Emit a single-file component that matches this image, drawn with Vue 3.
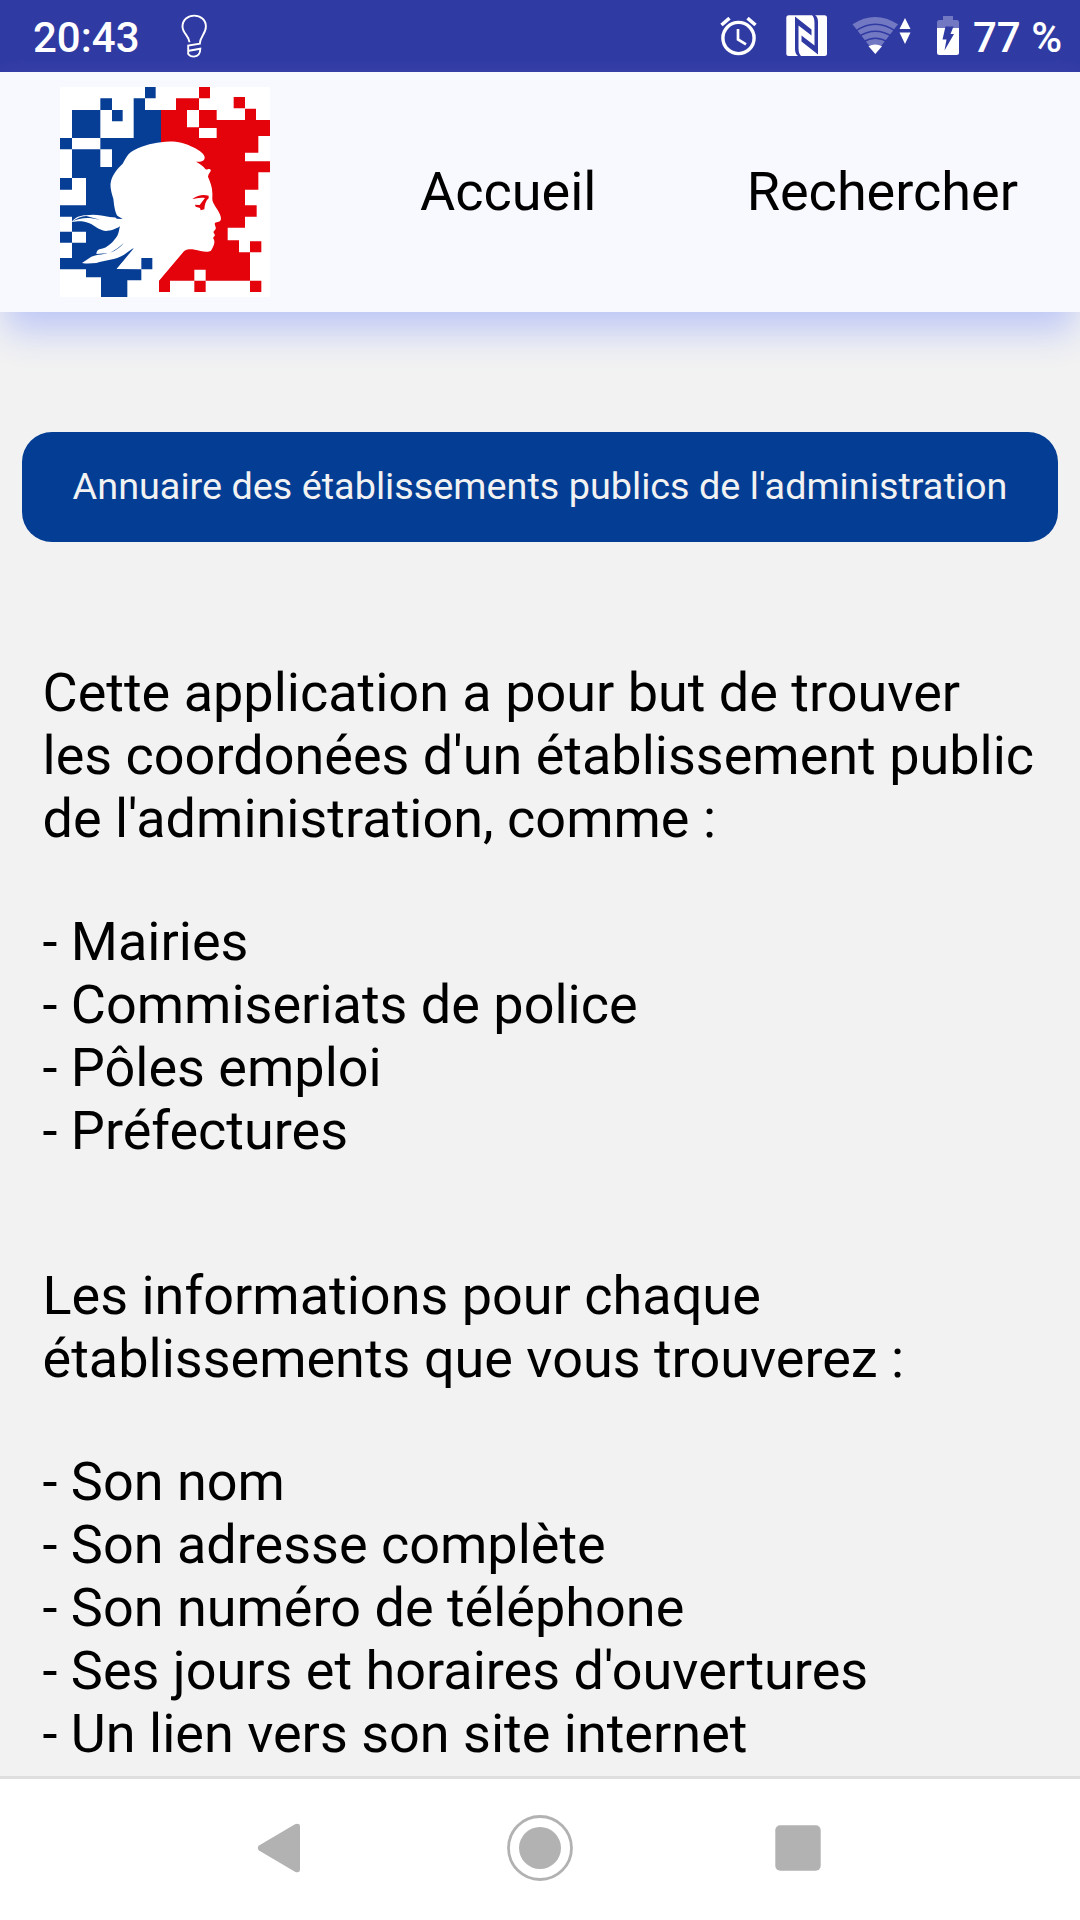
<script setup>
const menu = ['Accueil', 'Rechercher']
const sections = [
  {
    intro: ['Cette application a pour but de trouver', "les coordonées d'un établissement public", "de l'administration, comme :"],
    items: ['Mairies', 'Commiseriats de police', 'Pôles emploi', 'Préfectures'],
  },
  {
    intro: ['Les informations pour chaque', 'établissements que vous trouverez :'],
    items: ['Son nom', 'Son adresse complète', 'Son numéro de téléphone', "Ses jours et horaires d'ouvertures", 'Un lien vers son site internet'],
  },
]
</script>

<template>
  <div class="screen">
    <div class="status">
      <span class="clock">20:43</span>
      <svg class="bulb" width="30" height="48" viewBox="0 0 30 48" fill="none" stroke="#fff" stroke-width="1.9">
        <path d="M9.500 28.300C9 21.500 2.500 19.500 2.500 12.600C2.500 5.800 8 1.600 14.200 1.600S25.900 5.800 25.900 12.600C25.900 20 20 22.500 19.800 29.800L8.200 31.500V40Q10 42.600 14 42.600Q20.300 42 20.300 34.700L9 36.700" />
      </svg>
      <span class="spring"></span>
      <svg class="alarm" width="38" height="40" viewBox="0 0 38 40" fill="none" stroke="#fff">
        <circle cx="18.500" cy="21" r="15.600" stroke-width="3.400" />
        <path d="M1.500 8L9.500 1.200M27.500 1.200L35.500 8" stroke-width="3.600" />
        <path d="M18 12V22.500L26 27.300" stroke-width="2.700" />
      </svg>
      <svg class="nfc" width="42" height="42" viewBox="0 0 42 42">
        <rect x=".3" y=".3" width="40.700" height="40.700" rx="2.500" fill="#fff" />
        <path fill="#303aa3" d="M9 1.500L25.500 14.500V20.500L12.500 10.500V33Q12.500 38.500 15 41H12Q9 39 9 34ZM32 39.500L15.500 26.500V20.500L28.500 30.500V8Q28.500 2.500 26 0H29Q32 2 32 7Z" />
      </svg>
      <svg class="wifi" width="60" height="40" viewBox="0 0 60 40">
        <path d="M.5 8.300Q23 -6.500 46 8.300L23.300 37.500Z" fill="#7279c2" />
        <path d="M16.500 30.200Q23.300 26.600 30 30.200L23.300 38Z" fill="#fff" />
        <path d="M3 15.500Q23.300 1 44 15.500M6 21Q23.300 9.500 41 21M11 26Q23.300 18.500 36 26" fill="none" stroke="#303aa3" stroke-width="1.500" />
        <path d="M53 2L58.500 13H47.500ZM53 28L58.500 16.500H47.500Z" fill="#fff" />
      </svg>
      <svg class="battery" width="22" height="39" viewBox="0 0 22 39">
        <path d="M6 0H16V4H19.500Q22 4 22 6.500V12H0V6.500Q0 4 2.500 4H6Z" fill="#7279c2" />
        <path d="M0 12H22V36.500Q22 39 19.500 39H2.500Q0 39 0 36.500Z" fill="#fff" />
        <path d="M8.500 10.500H16.500L13.500 18H17L7.500 34.500L9.500 23.500H5.500Z" fill="#303aa3" />
      </svg>
      <span class="level">77 %</span>
    </div>

    <header class="header">
      <svg class="logo" width="210" height="210" viewBox="30 21 630 630">
        <rect x="30" y="21" width="630" height="630" fill="#fff" />
        <path fill="#063e95" d="M285 21H317V55H285ZM151 55H186V90H151ZM186 90H218V124H186ZM66 90H151V174H66ZM30 174H66V208H30ZM30 294H66V329H30ZM30 455H66V488H30ZM251 55H285V90H333V300H300V500H255L200 567H274V601H232V651H153V592H108V568H30V534H66V488H108V455H66V410H30V376H108V294H66V208H151V261H186V208H151V174H251Z" />
        <path fill="#e4020b" d="M447 21H480V55H447ZM551 51H585V85H551ZM600 484H634V517H600ZM600 602H634V636H600ZM433 602H467V636H433ZM333 90H378V55H447V90H500V120H585V86H618V120H660V168H625V218H585V244H660V277H625V329H585V376H620V410H585V443H533V481H567V517H600V602H467V569H433V602H360V636H327V601L400 515L395 440V260L333 230Z" />
        <path fill="#fff" d="M411 90H447V142H411ZM447 144H500V174H447Z" />
        <path fill="#fff" d="M333 187C366 181 401 187 421 198C445 208 461 219 464 231C465 241 458 246 447 245L438 245C448 250 462 260 467 268C472 271 476 263 482 269C484 276 475 280 474 290C480 305 487 321 487 338C488 350 485 357 489 367C497 384 513 400 513 417C512 427 501 425 495 429C492 434 499 440 497 447L490 456L495 466L489 474C499 487 489 501 483 512C469 520 450 511 434 509C412 506 404 511 397 519L327 602L274 568L200 567L255 505L247 506L222 524C196 540 165 540 139 549C125 550 112 552 96 549L124 530C147 521 170 524 194 512C207 504 214 498 222 488C207 501 187 519 169 520L139 522C140 515 142 511 148 508C176 503 190 484 202 467C207 458 207 448 210 439C194 449 183 452 167 453C146 452 129 431 109 427C92 421 80 425 65 426C75 412 91 406 108 406C132 401 156 406 179 411L205 413C195 397 193 382 190 356C184 338 180 320 182 309C185 286 202 266 218 251C225 238 232 224 243 216C269 200 303 190 333 187Z" />
        <path fill="#063e95" d="M274 534H307V568H274ZM187 400L203 408L218 417L200 416ZM66 425Q85 410 109 408L150 419L120 414Q90 412 66 425Z" />
        <path fill="#e4020b" d="M427 357C443 346 458 342 476 347V355C467 362 464 375 463 388L452 391L450 384L437 380L435 374L449 375L465 354C450 351 440 355 427 357Z" />
      </svg>
      <nav class="menu">
        <a v-for="entry in menu" :key="entry">{{ entry }}</a>
      </nav>
    </header>

    <main class="content">
      <div class="title">Annuaire des établissements publics de l'administration</div>
      <section v-for="section in sections" :key="section.intro[0]" class="section">
        <p><span v-for="line in section.intro" :key="line">{{ line }}</span></p>
        <ul>
          <li v-for="item in section.items" :key="item">- {{ item }}</li>
        </ul>
      </section>
    </main>

    <footer class="navbar">
      <svg width="44" height="50" viewBox="0 0 44 50" fill="#b2b2b2"><path d="M2 22.500L38 1.300Q43 -.5 43 4V46Q43 50.500 38 48.700L2 27.500Q-.5 25 2 22.500Z" /></svg>
      <svg class="home" width="66" height="66" viewBox="0 0 66 66"><circle cx="33" cy="33" r="31.500" fill="none" stroke="#b2b2b2" stroke-width="2.800" /><circle cx="33" cy="33" r="21" fill="#b2b2b2" /></svg>
      <svg width="46" height="46" viewBox="0 0 46 46"><rect x=".3" y=".3" width="45.400" height="45.400" rx="5" fill="#b2b2b2" /></svg>
    </footer>
  </div>
</template>

<style>
body { margin: 0; }
</style>

<style scoped>
.screen {
  width: 1080px;
  height: 1920px;
  display: flex;
  flex-direction: column;
  overflow: hidden;
  background: #f2f2f2;
  color: #000;
  font-family: Roboto, "Liberation Sans", sans-serif;
}
.status {
  height: 72px;
  flex: none;
  display: flex;
  align-items: flex-start;
  box-sizing: border-box;
  padding: 0 18px 0 33px;
  background: #303aa3;
  color: #fff;
  font-size: 42px;
  font-weight: 500;
  line-height: 50px;
  white-space: nowrap;
}
.clock { width: 147px; margin-top: 13px; }
.bulb { margin-top: 14px; }
.spring { flex: 1; }
.alarm { margin: 17px 28px 0 0; }
.nfc { margin: 15px 24px 0 0; }
.wifi { margin: 16px 25px 0 0; }
.battery { margin: 16px 14px 0 0; }
.level { margin-top: 13px; width: 89px; }
.header {
  height: 240px;
  flex: none;
  display: flex;
  align-items: center;
  box-sizing: border-box;
  padding: 0 62px 0 60px;
  background: #f8f9ff;
  box-shadow: 0 24px 34px -5px #bdc7f6;
}
.menu {
  flex: 1;
  display: flex;
  justify-content: space-between;
  margin: 0 0 2px 150px;
  font-size: 54px;
  line-height: 63px;
}
.content {
  flex: 1;
  min-height: 0;
  padding-top: 120px;
}
.title {
  height: 110px;
  margin: 0 22px 119px;
  border-radius: 30px;
  background: #043e94;
  color: #f2f2f2;
  font-size: 37.8px;
  line-height: 108px;
  text-align: center;
  white-space: nowrap;
}
.section {
  margin: 0 0 102px 42.5px;
  font-size: 54px;
  line-height: 63px;
  white-space: nowrap;
}
p, ul { margin: 0; padding: 0; list-style: none; }
p { margin-bottom: 60px; }
p span { display: block; }
.navbar {
  height: 144px;
  flex: none;
  display: flex;
  align-items: center;
  justify-content: space-between;
  box-sizing: border-box;
  padding: 0 259px 4px 257px;
  border-top: 3px solid #dfdfdf;
  background: #fff;
}
.home { margin-left: 4px; }
</style>
